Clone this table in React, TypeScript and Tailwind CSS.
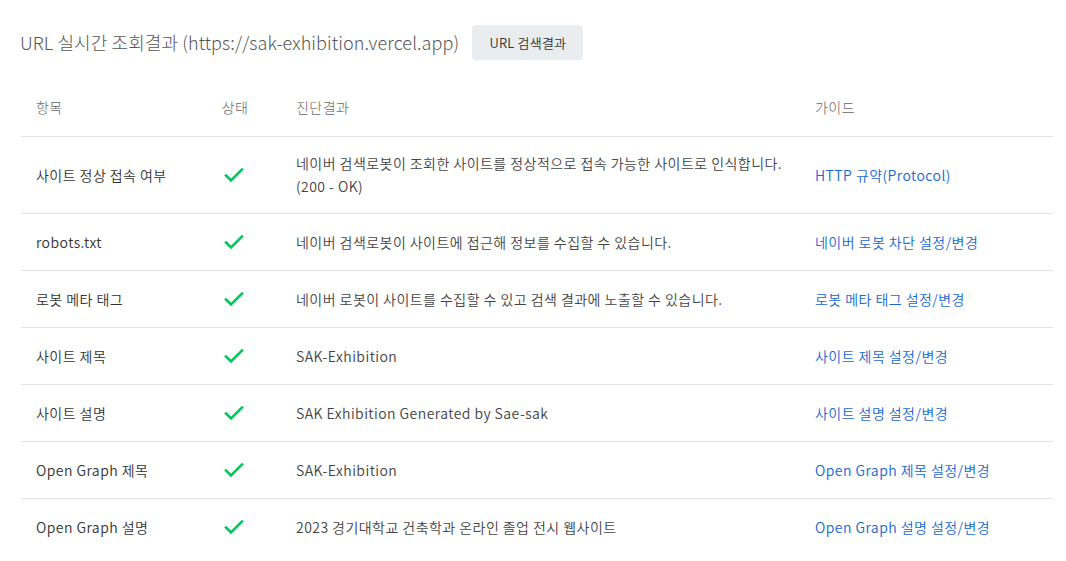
const rows: { item: string; result: string[]; guide: string }[] = [
  {
    item: "사이트 정상 접속 여부",
    result: ["네이버 검색로봇이 조회한 사이트를 정상적으로 접속 가능한 사이트로 인식합니다.", "(200 - OK)"],
    guide: "HTTP 규약(Protocol)",
  },
  { item: "robots.txt", result: ["네이버 검색로봇이 사이트에 접근해 정보를 수집할 수 있습니다."], guide: "네이버 로봇 차단 설정/변경" },
  { item: "로봇 메타 태그", result: ["네이버 로봇이 사이트를 수집할 수 있고 검색 결과에 노출할 수 있습니다."], guide: "로봇 메타 태그 설정/변경" },
  { item: "사이트 제목", result: ["SAK-Exhibition"], guide: "사이트 제목 설정/변경" },
  { item: "사이트 설명", result: ["SAK Exhibition Generated by Sae-sak"], guide: "사이트 설명 설정/변경" },
  { item: "Open Graph 제목", result: ["SAK-Exhibition"], guide: "Open Graph 제목 설정/변경" },
  { item: "Open Graph 설명", result: ["2023 경기대학교 건축학과 온라인 졸업 전시 웹사이트"], guide: "Open Graph 설명 설정/변경" },
];

const Check = () => (
  <svg width="20" height="16" viewBox="0 0 20 16" fill="none" className="mx-auto">
    <polyline points="2,8.5 7,13.5 18,2.5" stroke="#03c75a" strokeWidth="2.6" strokeLinecap="square" />
  </svg>
);

const cols = "grid grid-cols-[177px_72px_531px_1fr] items-center";

export default function App() {
  return (
    <div className="min-h-screen bg-white pl-[20px] pr-[13px] pt-[25px] font-['Noto_Sans_CJK_KR','Noto_Sans',sans-serif] font-light">
      <div className="flex items-center gap-[13px] h-[35px]">
        <h1 className="text-[18px] text-[#555] font-light tracking-[0.1px]">
          URL 실시간 조회결과 (https://sak-exhibition.vercel.app)
        </h1>
        <button className="h-[35px] w-[111px] rounded-[4px] bg-[#eaedf0] text-[13px] text-[#333] font-[350] tracking-[0.2px]">
          URL 검색결과
        </button>
      </div>

      <div className="mt-[19px] ml-px text-[14px] tracking-[0.45px]">
        <div className={`${cols} h-[57px] text-[#666]`}>
          <div className="pl-[15px]">항목</div>
          <div className="text-center pl-[2px]">상태</div>
          <div className="pl-[26px]">진단결과</div>
          <div className="pl-[14px]">가이드</div>
        </div>
        {rows.map((r) => (
          <div key={r.item} className={`${cols} min-h-[57px] border-t border-[#e2e2e2] py-[15px]`}>
            <div className="pl-[15px] text-[#333] font-[350]">{r.item}</div>
            <div>
              <Check />
            </div>
            <div className="pl-[26px] text-[#444] leading-[23px] font-[350]">
              {r.result.map((l) => (
                <div key={l}>{l}</div>
              ))}
            </div>
            <div className="pl-[14px]">
              <a href="#" className="text-[#1767cf] font-[350]">
                {r.guide}
              </a>
            </div>
          </div>
        ))}
      </div>
    </div>
  );
}
